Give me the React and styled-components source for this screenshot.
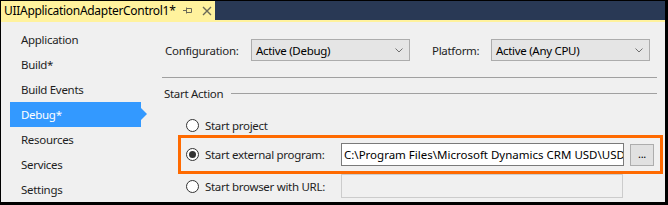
import styled, { createGlobalStyle } from "styled-components";

const GlobalStyle = createGlobalStyle`
  html, body {
    margin: 0;
    padding: 0;
    background: #000;
  }
  body {
    font-family: "Noto Sans", "Liberation Sans", sans-serif;
    font-size: 11.5px;
    letter-spacing: -0.3px;
    color: #1e1e1e;
  }
`;

const Frame = styled.div`
  width: 668px;
  height: 205px;
  box-sizing: border-box;
  border-style: solid;
  border-color: #000;
  border-width: 1px 3px 3px 1px;
  display: flex;
  flex-direction: column;
  background: #f0f0f0;
  overflow: hidden;
`;

const TitleBar = styled.div`
  height: 19px;
  background: #293955;
  display: flex;
  flex-shrink: 0;
`;

const Tab = styled.div`
  width: 214px;
  background: #fff29d;
  display: flex;
  align-items: center;
  padding-left: 3px;
  box-sizing: border-box;
  color: #000;
  font-size: 12px;
`;

const TabTitle = styled.span`
  width: 179px;
  flex-shrink: 0;
  white-space: nowrap;
`;

const TabIcon = styled.svg`
  margin-right: ${(p) => p.$gap || 0}px;
  flex-shrink: 0;
`;

const TabLine = styled.div`
  height: 2px;
  background: #fff29d;
  flex-shrink: 0;
`;

const Body = styled.div`
  flex: 1;
  display: flex;
`;

const Sidebar = styled.div`
  width: 149px;
  padding-top: 5px;
  flex-shrink: 0;
  display: flex;
  flex-direction: column;
`;

const NavItem = styled.div`
  position: relative;
  height: 25px;
  display: flex;
  align-items: center;
  margin-left: 9px;
  width: 131px;
  padding-left: 11px;
  box-sizing: border-box;
  background: ${(p) => (p.$active ? "#3399ff" : "transparent")};
  color: ${(p) => (p.$active ? "#fff" : "#1e1e1e")};

  &::after {
    content: "";
    display: ${(p) => (p.$active ? "block" : "none")};
    position: absolute;
    right: -6px;
    top: 6px;
    border-style: solid;
    border-width: 6px 0 6px 6px;
    border-color: transparent transparent transparent #3399ff;
  }
`;

const Main = styled.div`
  flex: 1;
  padding: 17px 0 0 12px;
  display: flex;
  flex-direction: column;
`;

const ConfigRow = styled.div`
  display: flex;
  align-items: center;
  height: 22px;
`;

const FieldLabel = styled.span`
  width: ${(p) => p.$width}px;
  margin-left: ${(p) => p.$offset || 0}px;
  white-space: nowrap;
  flex-shrink: 0;
`;

const Select = styled.div`
  width: 159px;
  height: 22px;
  box-sizing: border-box;
  border: 1px solid #acacac;
  background: #e5e5e5;
  display: flex;
  align-items: center;
  justify-content: space-between;
  padding: 0 6px 0 4px;
  color: #000;
`;

const Separator = styled.div`
  width: 495px;
  height: 1px;
  background: #a0a0a0;
  margin-top: 16px;
`;

const GroupHeader = styled.div`
  display: flex;
  align-items: center;
  height: 16px;
  margin-top: 7px;
  padding-left: 2px;
  width: 493px;
  gap: 8px;

  &::after {
    content: "";
    flex: 1;
    height: 1px;
    background: #a0a0a0;
  }
`;

const RadioRow = styled.div`
  display: flex;
  align-items: center;
  height: ${(p) => p.$height || 20}px;
  margin-top: ${(p) => p.$top || 0}px;
  padding-left: 24px;
`;

const Highlight = styled.div`
  margin-left: 16px;
  width: 485px;
  height: 39px;
  box-sizing: border-box;
  border: 3px solid #ff6a00;
  display: flex;
  align-items: center;
  padding-left: 5px;
`;

const Radio = styled.span`
  width: 13px;
  height: 13px;
  box-sizing: border-box;
  border-radius: 50%;
  border: 1px solid #333;
  background: #fff;
  display: flex;
  align-items: center;
  justify-content: center;
  flex-shrink: 0;
  margin-right: 6px;

  &::after {
    content: "";
    display: ${(p) => (p.$checked ? "block" : "none")};
    width: 7px;
    height: 7px;
    border-radius: 50%;
    background: #333;
  }
`;

const RadioLabel = styled.span`
  width: ${(p) => p.$width || "auto"};
  white-space: nowrap;
  flex-shrink: 0;
`;

const TextBox = styled.div`
  width: ${(p) => p.$width}px;
  height: ${(p) => p.$height}px;
  box-sizing: border-box;
  border: 1px solid ${(p) => (p.$disabled ? "#cccccc" : "#7a7a7a")};
  background: ${(p) => (p.$disabled ? "#f0f0f0" : "#fff")};
  display: flex;
  align-items: center;
  padding-left: 2px;
  overflow: hidden;
  white-space: nowrap;
  letter-spacing: 0;
  color: #000;
  flex-shrink: 0;
`;

const BrowseButton = styled.div`
  width: 24px;
  height: 22px;
  box-sizing: border-box;
  margin-left: 6px;
  border: 1px solid #adadad;
  background: #e1e1e1;
  display: flex;
  align-items: center;
  justify-content: center;
  font-size: 11px;
  color: #000;
  padding-bottom: 3px;
  flex-shrink: 0;
`;

const Chevron = () => (
  <svg width="8" height="5" viewBox="0 0 8 5">
    <path d="M0.5 0.5 L4 4 L7.5 0.5" fill="none" stroke="#707070" strokeWidth="1" />
  </svg>
);

const navItems = [
  "Application",
  "Build*",
  "Build Events",
  "Debug*",
  "Resources",
  "Services",
  "Settings",
];

const App = () => {
  return (
    <>
      <GlobalStyle />
      <Frame>
        <TitleBar>
          <Tab>
            <TabTitle>UIIApplicationAdapterControl1*</TabTitle>
            <TabIcon $gap={10} width="9" height="9" viewBox="0 0 9 9">
              <path d="M0 4.5 H3 M3.5 1.5 V7.5 M3.5 2.5 H8.5 V6.5 H3.5" fill="none" stroke="#6b6a58" strokeWidth="1" />
            </TabIcon>
            <TabIcon $gap={5} width="10" height="10" viewBox="0 0 10 10">
              <path d="M1 1 L9 9 M9 1 L1 9" fill="none" stroke="#6b6a58" strokeWidth="1.4" />
            </TabIcon>
          </Tab>
        </TitleBar>
        <TabLine />
        <Body>
          <Sidebar>
            {navItems.map((item) => (
              <NavItem key={item} $active={item === "Debug*"}>
                {item}
              </NavItem>
            ))}
          </Sidebar>
          <Main>
            <ConfigRow>
              <FieldLabel $width={86} $offset={3}>Configuration:</FieldLabel>
              <Select>
                Active (Debug)
                <Chevron />
              </Select>
              <FieldLabel $width={59} $offset={22}>Platform:</FieldLabel>
              <Select>
                Active (Any CPU)
                <Chevron />
              </Select>
            </ConfigRow>
            <Separator />
            <GroupHeader>Start Action</GroupHeader>
            <RadioRow $top={14}>
              <Radio />
              <RadioLabel>Start project</RadioLabel>
            </RadioRow>
            <Highlight>
              <Radio $checked />
              <RadioLabel $width="136px">Start external program:</RadioLabel>
              <TextBox $width={283} $height={23}>
                C:\Program Files\Microsoft Dynamics CRM USD\USD
              </TextBox>
              <BrowseButton>...</BrowseButton>
            </Highlight>
            <RadioRow $height={24}>
              <Radio />
              <RadioLabel $width="136px">Start browser with URL:</RadioLabel>
              <TextBox $width={282} $height={24} $disabled />
            </RadioRow>
          </Main>
        </Body>
      </Frame>
    </>
  );
};

export default App;
